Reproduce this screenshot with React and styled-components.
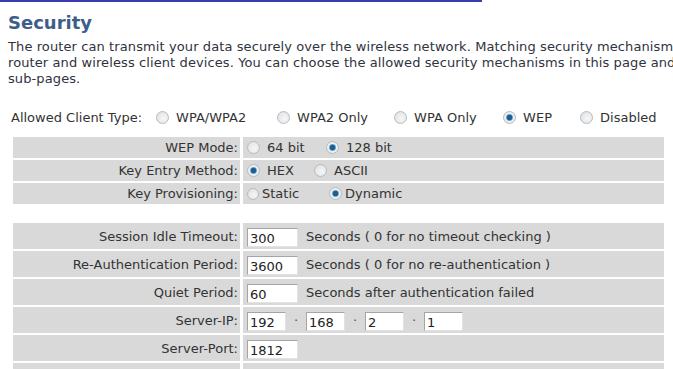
import React from 'react';
import styled, {createGlobalStyle} from 'styled-components';

const App = () => {
  return (
    <Page>
      <GlobalStyle />
      <TopRule />
      <Content>
        <Title>Security</Title>
        <Intro>
          The router can transmit your data securely over the wireless network. Matching security mechanisms must be set up on both the
          <br />
          router and wireless client devices. You can choose the allowed security mechanisms in this page and configure them in the
          <br />
          sub-pages.
        </Intro>
        <ClientType>
          <span>Allowed Client Type:</span>
          <Option $w={121}><Radio /> WPA/WPA2</Option>
          <Option $w={117}><Radio /> WPA2 Only</Option>
          <Option $w={109}><Radio /> WPA Only</Option>
          <Option $w={77}><Radio $on /> WEP</Option>
          <Option><Radio /> Disabled</Option>
        </ClientType>

        <Table>
          <Label>WEP Mode:</Label>
          <Value>
            <Option $w={79}><Radio /> 64 bit</Option>
            <Option><Radio $on /> 128 bit</Option>
          </Value>
          <Label>Key Entry Method:</Label>
          <Value>
            <Option $w={67}><Radio $on /> HEX</Option>
            <Option><Radio /> ASCII</Option>
          </Value>
          <Label>Key Provisioning:</Label>
          <Value>
            <Option $w={82} $tight><Radio $small /> Static</Option>
            <Option $tight><Radio $on /> Dynamic</Option>
          </Value>
        </Table>

        <Table $tall>
          <Label>Session Idle Timeout:</Label>
          <Value>
            <Field defaultValue="300" />
            <Note>Seconds ( 0 for no timeout checking )</Note>
          </Value>
          <Label>Re-Authentication Period:</Label>
          <Value>
            <Field defaultValue="3600" />
            <Note>Seconds ( 0 for no re-authentication )</Note>
          </Value>
          <Label>Quiet Period:</Label>
          <Value>
            <Field defaultValue="60" />
            <Note>Seconds after authentication failed</Note>
          </Value>
          <Label>Server-IP:</Label>
          <Value>
            <IpField defaultValue="192" />
            <Dot>·</Dot>
            <IpField defaultValue="168" />
            <Dot>·</Dot>
            <IpField defaultValue="2" />
            <Dot>·</Dot>
            <IpField defaultValue="1" />
          </Value>
          <Label>Server-Port:</Label>
          <Value>
            <Field defaultValue="1812" />
          </Value>
          <Label />
          <Value />
        </Table>
      </Content>
    </Page>
  );
};

export default App;

// styled components
const GlobalStyle = createGlobalStyle`
  body {
    margin: 0;
    background: #fff;
    font-family: "DejaVu Sans", Verdana, sans-serif;
    font-size: 13px;
    color: #333;
  }
`;

const Page = styled.div`
  width: 673px;
  height: 369px;
  overflow: hidden;
`;

const TopRule = styled.div`
  width: 482px;
  height: 2px;
  background: #3b3bb0;
`;

const Content = styled.div`
  padding-left: 8px;
`;

const Title = styled.h1`
  margin: 9px 0 0;
  font-size: 18px;
  line-height: 24px;
  font-weight: bold;
  color: #3d5e89;
`;

const Intro = styled.p`
  margin: 4px 0 0;
  line-height: 16px;
  white-space: nowrap;
  letter-spacing: 0.1px;
  color: #2f3340;
`;

const ClientType = styled.div`
  display: flex;
  align-items: center;
  margin: 20px 0 0 3px;
  height: 20px;
  white-space: nowrap;

  & > span {
    margin-right: 14px;
  }
`;

const Option = styled.label`
  display: inline-flex;
  align-items: center;
  gap: ${(p) => (p.$tight ? '3px' : '7px')};
  width: ${(p) => (p.$w ? `${p.$w}px` : 'auto')};
  white-space: nowrap;
`;

const Radio = styled.span`
  display: inline-block;
  box-sizing: border-box;
  width: ${(p) => (p.$small ? '12px' : '13px')};
  height: ${(p) => (p.$small ? '12px' : '13px')};
  border-radius: 50%;
  border: 1px solid #b8bcbf;
  background: ${(p) =>
    p.$on
      ? 'radial-gradient(circle, #1f5f8f 0 2.5px, #6aa3c8 3px, #eef1f3 4px, #dfe3e6 100%)'
      : 'radial-gradient(circle at 60% 60%, #f6f6f6 0, #e6e8ea 60%, #d4d7da 100%)'};
  flex-shrink: 0;
`;

const Table = styled.div`
  display: grid;
  grid-template-columns: 227px 421px;
  grid-auto-rows: ${(p) => (p.$tall ? '26px' : '21px')};
  gap: 2px 3px;
  margin: ${(p) => (p.$tall ? '19px' : '10px')} 0 0 5px;
`;

const Label = styled.div`
  background: #d9d9d9;
  display: flex;
  align-items: center;
  justify-content: flex-end;
  padding-right: 2px;
  white-space: nowrap;
`;

const Value = styled.div`
  background: #d9d9d9;
  display: flex;
  align-items: center;
  padding-left: 4px;
  white-space: nowrap;
`;

const Field = styled.input`
  box-sizing: border-box;
  width: 51px;
  height: 19px;
  margin: 2px 0 0 0;
  padding: 2px 2px 0;
  font-family: "DejaVu Sans", Verdana, sans-serif;
  font-size: 13px;
  color: #222;
  background: #fff;
  border: 1px solid;
  border-color: #a5a5a5 #e2e2e2 #e2e2e2 #a5a5a5;
  outline: none;
`;

const IpField = styled(Field)`
  width: 39px;
`;

const Dot = styled.span`
  width: 20px;
  text-align: center;
  color: #555;
`;

const Note = styled.span`
  margin-left: 8px;
`;
